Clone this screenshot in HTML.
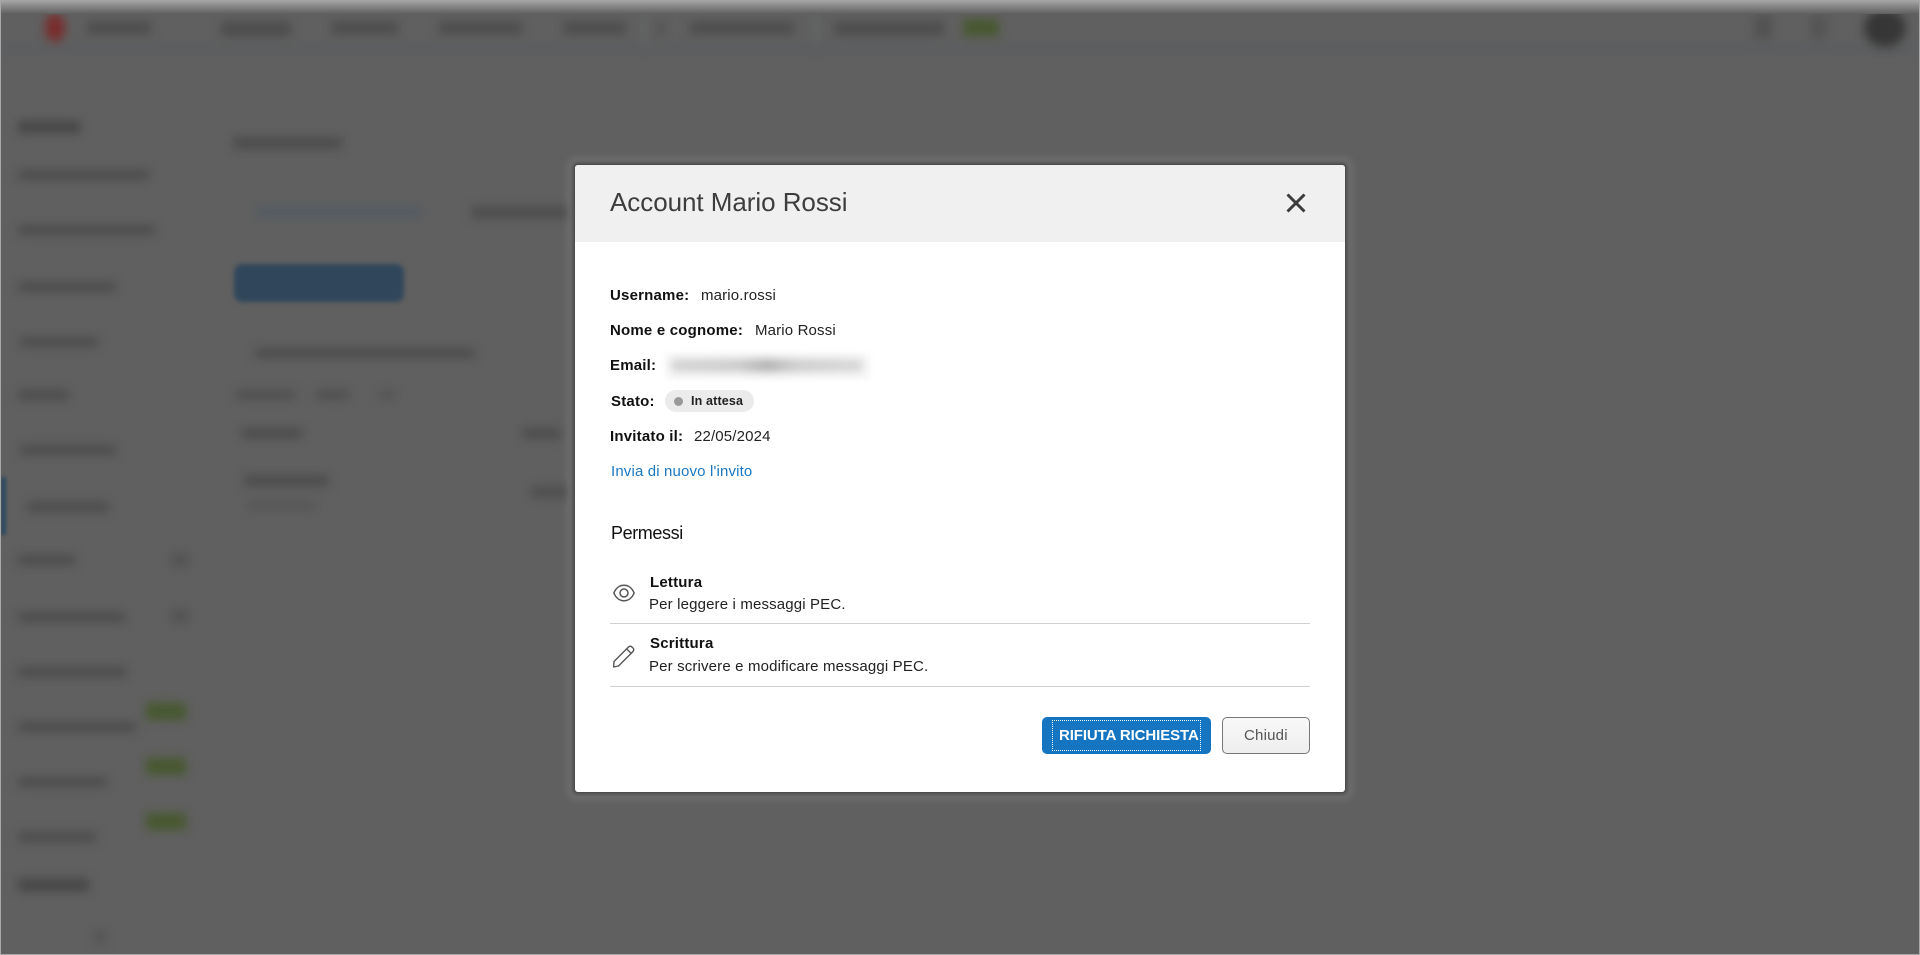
<!DOCTYPE html>
<html lang="it">
<head>
<meta charset="utf-8">
<title>Account Mario Rossi</title>
<style>
html,body{margin:0;padding:0;width:1920px;height:955px;overflow:hidden;background:#606060;font-family:"Liberation Sans",Arial,sans-serif}
#bg{position:absolute;left:0;top:0;width:1920px;height:955px;overflow:hidden;background:#606060}
#bg i{position:absolute;display:block;filter:blur(5px);background:#4c4c4c}
.top{position:absolute;left:0;top:0;width:1920px;height:14px;background:linear-gradient(#a8a8a8,#5f5f5f);z-index:1}
.frame{position:absolute;left:0;top:0;width:1918px;height:954px;border:1px solid #a9a9a9;border-top:0;z-index:2}
#m{position:absolute;left:575px;top:165px;width:770px;height:627px;background:#fff;border-radius:3px;box-shadow:0 0 0 1px #4c4c4c,0 0 3px 3px #525252,0 0 8px 7px #737373;z-index:3}
#h{position:absolute;left:575px;top:165px;width:770px;height:77px;background:#f0f0f0;border-radius:3px 3px 0 0;z-index:4}
.t{position:absolute;white-space:nowrap;z-index:5;line-height:20px;height:20px;font-size:15px;color:#222;letter-spacing:.15px}
.b{font-weight:700;color:#111;letter-spacing:.2px}
.l{position:absolute;left:610px;width:700px;height:1px;background:#d0d0d0;z-index:5}
svg{position:absolute;z-index:5;overflow:visible}
</style>
</head>
<body>
<div id="bg">
<i style="left:0;top:46px;width:1920px;height:6px;background:#5a5d60"></i>
<i style="left:643px;top:6px;width:174px;height:3px;background:#63727e"></i>
<i style="left:643px;top:8px;width:2px;height:40px;background:#6a6e72"></i>
<i style="left:815px;top:8px;width:2px;height:40px;background:#6a6e72"></i>
<i style="left:45px;top:13px;width:20px;height:29px;background:#7a2c2c;border-radius:50%"></i>
<i style="left:87px;top:22px;width:64px;height:12px"></i>
<i style="left:221px;top:22px;width:70px;height:14px"></i>
<i style="left:331px;top:22px;width:67px;height:12px"></i>
<i style="left:439px;top:22px;width:83px;height:12px"></i>
<i style="left:563px;top:22px;width:63px;height:12px"></i>
<i style="left:658px;top:22px;width:6px;height:12px"></i>
<i style="left:690px;top:22px;width:104px;height:12px"></i>
<i style="left:834px;top:22px;width:110px;height:13px"></i>
<i style="left:963px;top:19px;width:36px;height:17px;background:#47582f"></i>
<i style="left:1754px;top:15px;width:18px;height:24px;background:#525252"></i>
<i style="left:1811px;top:15px;width:16px;height:24px;background:#545454"></i>
<i style="left:1864px;top:9px;width:42px;height:38px;background:#363636;border-radius:50%"></i>

<i style="left:18px;top:121px;width:62px;height:12px;background:#454545"></i>
<i style="left:18px;top:170px;width:131px;height:10px"></i>
<i style="left:18px;top:225px;width:137px;height:10px"></i>
<i style="left:18px;top:282px;width:98px;height:10px"></i>
<i style="left:20px;top:337px;width:78px;height:10px"></i>
<i style="left:18px;top:390px;width:51px;height:10px"></i>
<i style="left:20px;top:445px;width:96px;height:10px"></i>
<i style="left:27px;top:502px;width:82px;height:10px"></i>
<i style="left:1px;top:477px;width:5px;height:58px;background:#2d4a60;filter:blur(1.5px)"></i>
<i style="left:18px;top:555px;width:57px;height:10px"></i>
<i style="left:172px;top:553px;width:16px;height:14px;background:#525252"></i>
<i style="left:18px;top:612px;width:107px;height:10px"></i>
<i style="left:172px;top:609px;width:16px;height:14px;background:#525252"></i>
<i style="left:18px;top:667px;width:109px;height:10px"></i>
<i style="left:18px;top:722px;width:118px;height:10px"></i>
<i style="left:18px;top:777px;width:89px;height:10px"></i>
<i style="left:18px;top:832px;width:78px;height:10px"></i>
<i style="left:146px;top:703px;width:40px;height:17px;background:#47582f"></i>
<i style="left:146px;top:758px;width:40px;height:17px;background:#47582f"></i>
<i style="left:146px;top:813px;width:40px;height:17px;background:#47582f"></i>
<i style="left:18px;top:879px;width:71px;height:12px;background:#454545"></i>
<i style="left:94px;top:931px;width:12px;height:12px;background:#535353"></i>

<i style="left:233px;top:137px;width:109px;height:12px"></i>
<i style="left:255px;top:207px;width:167px;height:10px;background:#535b63"></i>
<i style="left:471px;top:207px;width:105px;height:11px"></i>
<i style="left:234px;top:264px;width:170px;height:38px;background:#30475b;border-radius:8px;filter:blur(2.5px)"></i>
<i style="left:255px;top:348px;width:220px;height:10px"></i>
<i style="left:236px;top:390px;width:59px;height:10px;background:#505050"></i>
<i style="left:316px;top:390px;width:33px;height:10px;background:#505050"></i>
<i style="left:378px;top:390px;width:18px;height:9px;background:#555"></i>
<i style="left:242px;top:428px;width:60px;height:11px"></i>
<i style="left:523px;top:428px;width:37px;height:11px"></i>
<i style="left:244px;top:475px;width:85px;height:11px"></i>
<i style="left:247px;top:501px;width:69px;height:9px;background:#565656"></i>
<i style="left:531px;top:487px;width:44px;height:10px"></i>
</div>
<div class="top"></div>
<div class="frame"></div>

<div id="m"></div>
<div id="h"></div>

<div class="t" style="left:610px;top:189px;height:26px;line-height:26px;font-size:26px;color:#3d3d3d;letter-spacing:-.05px">Account Mario Rossi</div>
<svg style="left:1286px;top:193px" width="20" height="20" viewBox="0 0 20 20"><path d="M1.5 1.5L18.5 18.5M18.5 1.5L1.5 18.5" stroke="#3c3c3c" stroke-width="3" fill="none"/></svg>

<div class="t b" style="left:610px;top:286px">Username:</div>
<div class="t" style="left:701px;top:286px">mario.rossi</div>
<div class="t b" style="left:610px;top:321px">Nome e cognome:</div>
<div class="t" style="left:755px;top:321px">Mario Rossi</div>
<div class="t b" style="left:610px;top:356px">Email:</div>
<div style="position:absolute;left:665px;top:353px;width:206px;height:27px;background:#fafafa;filter:blur(2px);z-index:5"></div>
<div style="position:absolute;left:671px;top:359px;width:192px;height:13px;background:linear-gradient(90deg,#d2d2d2,#c9c9c9 35%,#aeaeae 50%,#cbcbcb 65%,#d6d6d6);filter:blur(4.5px);z-index:6"></div>
<div class="t b" style="left:611px;top:392px">Stato:</div>
<div style="position:absolute;left:665px;top:390px;width:89px;height:22px;border-radius:11px;background:#ebebeb;z-index:5"></div>
<div style="position:absolute;left:674px;top:397px;width:9px;height:9px;border-radius:50%;background:#999;z-index:6"></div>
<div class="t" style="left:691px;top:391px;font-size:12.5px;font-weight:700;letter-spacing:.15px;color:#222;z-index:6">In attesa</div>
<div class="t b" style="left:610px;top:427px">Invitato il:</div>
<div class="t" style="left:694px;top:427px">22/05/2024</div>
<div class="t" style="left:611px;top:462px;color:#1a78c2">Invia di nuovo l'invito</div>

<div class="t" style="left:611px;top:523px;font-size:18px;color:#111;letter-spacing:-.4px">Permessi</div>

<svg style="left:613px;top:584px" width="22" height="18" viewBox="0 0 22 18" fill="none" stroke="#555" stroke-width="1.5"><path d="M.9 9C2.8 4.3 6.5 1.3 11 1.3S19.2 4.3 21.1 9C19.2 13.7 15.5 16.7 11 16.7S2.8 13.7.9 9Z"/><circle cx="11" cy="9" r="4"/></svg>
<div class="t b" style="left:650px;top:573px">Lettura</div>
<div class="t" style="left:649px;top:595px">Per leggere i messaggi PEC.</div>
<div class="l" style="top:623px"></div>

<svg style="left:612px;top:645px" width="23" height="23" viewBox="0 0 23 23" fill="none" stroke="#555" stroke-width="1.4" stroke-linejoin="round"><path d="M2 16.5L16.5 2C17.6 1 19 1 20.2 2.2L20.8 2.8C22 4 22 5.3 21 6.5L6.5 21L1.6 22Z"/><path d="M14.6 3.9L19.2 8.4"/></svg>
<div class="t b" style="left:650px;top:634px">Scrittura</div>
<div class="t" style="left:649px;top:657px">Per scrivere e modificare messaggi PEC.</div>
<div class="l" style="top:686px"></div>

<div style="position:absolute;left:1042px;top:717px;width:169px;height:37px;background:#1575c0;border-radius:5px;z-index:5"></div>
<div style="position:absolute;left:1052px;top:720px;width:147px;height:29px;border:1px dotted #fff;z-index:6"></div>
<div class="t" style="left:1059px;top:726px;font-weight:700;font-size:15px;color:#fff;letter-spacing:-.1px;z-index:7">RIFIUTA RICHIESTA</div>
<div style="position:absolute;left:1222px;top:717px;width:86px;height:35px;border:1px solid #777;background:linear-gradient(#f8f8f8,#eeeeee);border-radius:5px;z-index:5"></div>
<div class="t" style="left:1244px;top:726px;font-size:15px;color:#555;letter-spacing:.2px;z-index:6">Chiudi</div>
</body>
</html>
